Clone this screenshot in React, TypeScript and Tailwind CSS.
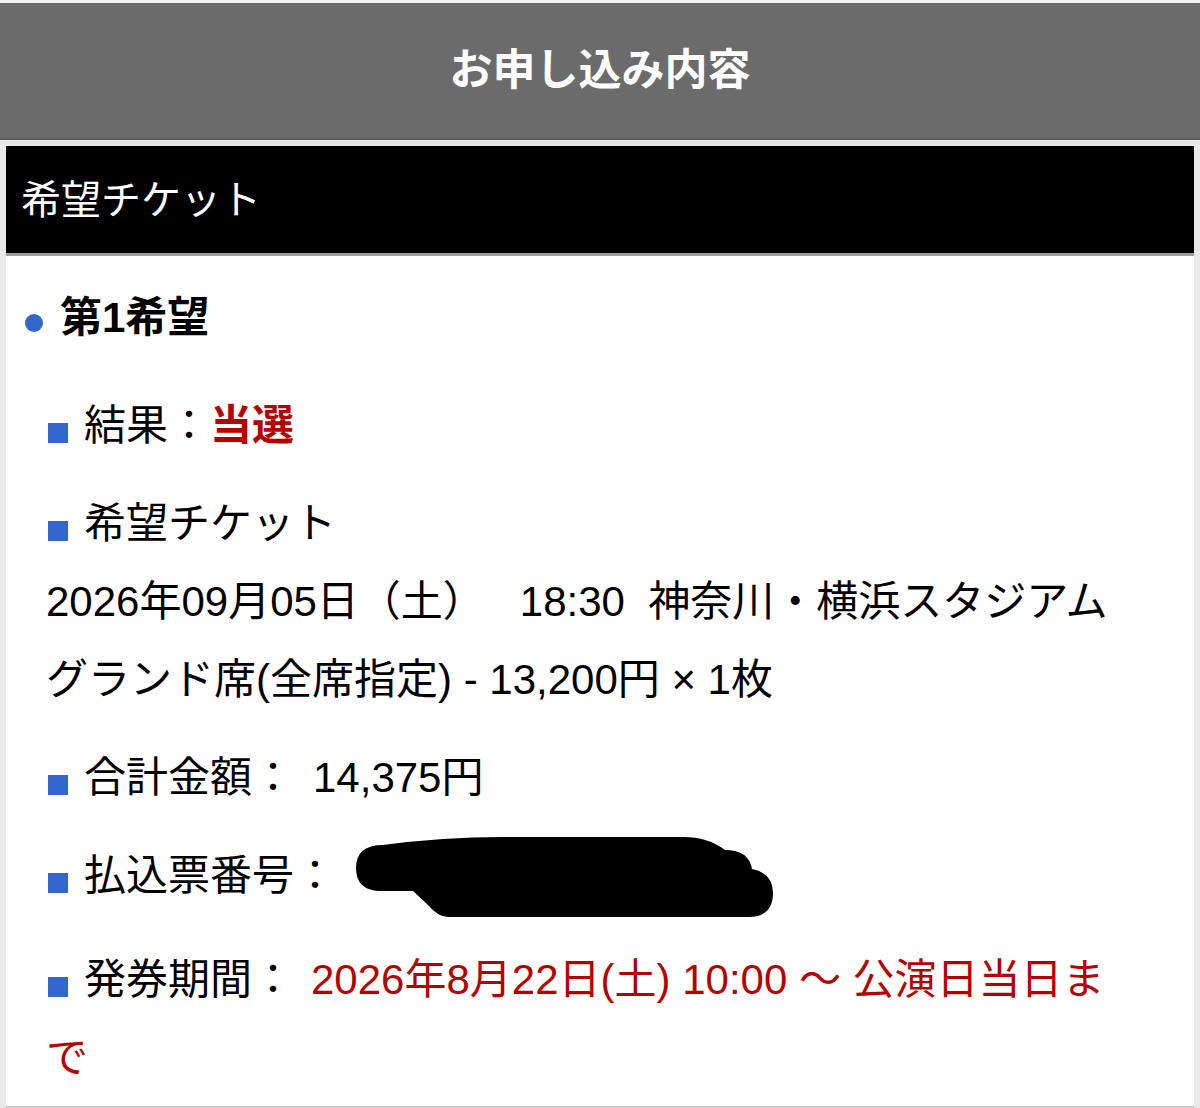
const Square = () => (
  <span className="inline-block w-5 h-5 ml-[2px] mr-4 bg-[#3366cc] align-[-3px]" />
);

const Redacted = () => (
  <svg width="424" height="88" viewBox="0 0 424 88" className="inline-block align-middle ml-[17px] -mt-1">
    <path
      d="M30 12 Q 90 4 150 4 L 330 4 Q 355 4 372 17 Q 396 17 399 36 Q 420 40 420 60 Q 420 84 395 84 L 95 84 Q 85 84 75 72 L 60 58 L 28 58 Q 3 58 3 35 Q 3 12 30 12 Z"
      fill="#000"
    />
  </svg>
);

export default function App() {
  return (
    <div className="w-[1200px] h-[1108px] bg-[#e9e9e9] font-['Liberation_Sans','Noto_Sans_CJK_JP',sans-serif] text-black overflow-hidden">
      <header className="h-[140px] bg-[#6b6b6b] border-t-[3px] border-t-[#f2f2f2] border-b-2 border-b-[#5c5c5c] flex items-center justify-center">
        <h1 className="text-white font-bold text-[43px]">お申し込み内容</h1>
      </header>

      <div className="px-[6px] pt-[6px]">
        <section className="bg-white h-[962px] border-b-2 border-b-[#c9c9c9]">
          <div className="h-[110px] bg-black border-b-[3px] border-b-[#9c9c9c] flex items-center pl-[15px] text-white text-[40px]">
            希望チケット
          </div>

          <div className="px-[40px] pt-[23px] text-[42px] leading-[78px]">
            <p className="-ml-[21px] font-bold">
              <span className="inline-block w-[18px] h-[18px] rounded-full bg-[#3366cc] mr-[17px] align-[0px]" />
              第1希望
            </p>

            <p className="mt-[30px]">
              <Square />
              結果：<span className="font-bold text-[#b50000]">当選</span>
            </p>

            <p className="mt-5">
              <Square />
              希望チケット
            </p>
            <p className="whitespace-pre">2026年09月05日（土）   18:30  神奈川・横浜スタジアム</p>
            <p className="whitespace-pre">グランド席(全席指定) - 13,200円 × 1枚</p>

            <p className="mt-5">
              <Square />
              合計金額：<span className="ml-[19px]">14,375円</span>
            </p>

            <p className="mt-5">
              <Square />
              払込票番号：
              <Redacted />
            </p>

            <p className="mt-5">
              <Square />
              発券期間：
              <span className="ml-[17px] text-[#b50000]">2026年8月22日(土) 10:00 〜 公演日当日ま</span>
              <br />
              <span className="text-[#b50000]">で</span>
            </p>
          </div>
        </section>
      </div>
    </div>
  );
}
